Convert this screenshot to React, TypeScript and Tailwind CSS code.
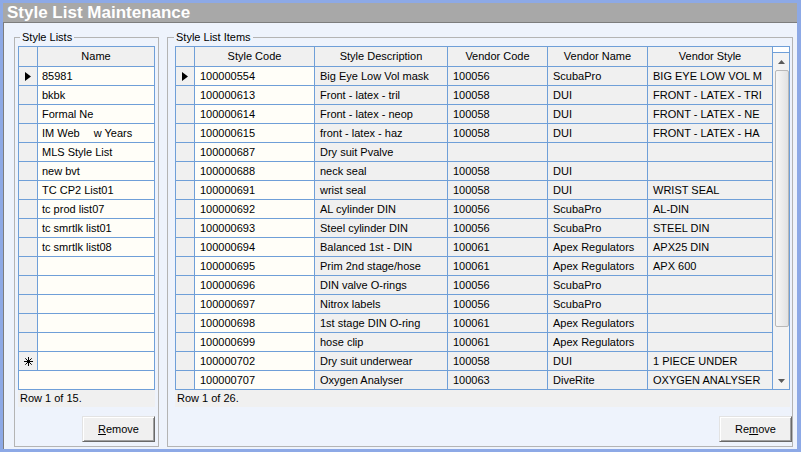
import React from "react";

const styleLists = [
  "85981",
  "bkbk",
  "Formal Ne",
  "IM Web|w Years",
  "MLS Style List",
  "new bvt",
  "TC CP2 List01",
  "tc prod list07",
  "tc smrtlk list01",
  "tc smrtlk list08",
  "",
  "",
  "",
  "",
  "",
];

const items: string[][] = [
  ["100000554", "Big Eye Low Vol mask", "100056", "ScubaPro", "BIG EYE LOW VOL M"],
  ["100000613", "Front - latex - tril", "100058", "DUI", "FRONT - LATEX - TRI"],
  ["100000614", "Front - latex - neop", "100058", "DUI", "FRONT - LATEX - NE"],
  ["100000615", "front - latex - haz", "100058", "DUI", "FRONT - LATEX - HA"],
  ["100000687", "Dry suit Pvalve", "", "", ""],
  ["100000688", "neck seal", "100058", "DUI", ""],
  ["100000691", "wrist seal", "100058", "DUI", "WRIST SEAL"],
  ["100000692", "AL cylinder DIN", "100056", "ScubaPro", "AL-DIN"],
  ["100000693", "Steel cylinder DIN", "100056", "ScubaPro", "STEEL DIN"],
  ["100000694", "Balanced 1st - DIN", "100061", "Apex Regulators", "APX25 DIN"],
  ["100000695", "Prim 2nd stage/hose", "100061", "Apex Regulators", "APX 600"],
  ["100000696", "DIN valve O-rings", "100056", "ScubaPro", ""],
  ["100000697", "Nitrox labels", "100056", "ScubaPro", ""],
  ["100000698", "1st stage DIN O-ring", "100061", "Apex Regulators", ""],
  ["100000699", "hose clip", "100061", "Apex Regulators", ""],
  ["100000702", "Dry suit underwear", "100058", "DUI", "1 PIECE UNDER"],
  ["100000707", "Oxygen Analyser", "100063", "DiveRite", "OXYGEN ANALYSER"],
];

const columns = [
  { title: "Style Code", w: "w-[120px]", bg: "bg-[#fffef8]" },
  { title: "Style Description", w: "w-[133px]", bg: "bg-[#f0f0f0]" },
  { title: "Vendor Code", w: "w-[100px]", bg: "bg-[#f0f0f0]" },
  { title: "Vendor Name", w: "w-[100px]", bg: "bg-[#f0f0f0]" },
  { title: "Vendor Style", w: "w-[125px]", bg: "bg-[#f0f0f0]" },
];

const RowArrow = () => (
  <svg width="6" height="9" viewBox="0 0 6 9">
    <polygon points="0,0 6,4.5 0,9" fill="#000" />
  </svg>
);

const NewRowMark = () => (
  <svg width="9" height="9" viewBox="0 0 9 9" stroke="#000" strokeWidth="1">
    <line x1="4.5" y1="0" x2="4.5" y2="9" />
    <line x1="0" y1="4.5" x2="9" y2="4.5" />
    <line x1="1.3" y1="1.3" x2="7.7" y2="7.7" />
    <line x1="7.7" y1="1.3" x2="1.3" y2="7.7" />
  </svg>
);

const RowHeader = ({ children }: { children?: React.ReactNode }) => (
  <div className="w-[19px] h-[19px] shrink-0 border-r border-b border-[#6f9fd8] bg-[#f0f0f0] flex items-center justify-center">
    {children}
  </div>
);

const RemoveButton = ({ hotkey }: { hotkey: number }) => {
  const word = "Remove";
  return (
    <button className="w-[73px] h-[26px] border border-t-[#e3e3e3] border-l-[#e3e3e3] border-b-[#696969] border-r-[#696969] shadow-[inset_1px_1px_0_#ffffff,inset_-1px_-1px_0_#a0a0a0] bg-[#f0f0f0] text-[11px] text-black">
      {word.slice(0, hotkey)}
      <span className="underline">{word[hotkey]}</span>
      {word.slice(hotkey + 1)}
    </button>
  );
};

const Scrollbar = () => (
  <div className="w-[16px] flex flex-col bg-[#f3f3f3]">
    <div className="h-[6px] bg-white border-b border-[#6f9fd8]" />
    <div className="h-[17px] flex items-center justify-center">
      <svg width="7" height="4" viewBox="0 0 7 4">
        <polygon points="0,4 3.5,0 7,4" fill="#5a5a5a" />
      </svg>
    </div>
    <div className="h-[257px] ml-[2px] rounded-[2px] border border-[#b8b8b8] bg-gradient-to-r from-[#f7f7f7] to-[#e2e2e2]" />
    <div className="flex-1" />
    <div className="h-[17px] flex items-center justify-center">
      <svg width="7" height="4" viewBox="0 0 7 4">
        <polygon points="0,0 3.5,4 7,0" fill="#5a5a5a" />
      </svg>
    </div>
  </div>
);

export default function App() {
  return (
    <div className="w-[801px] h-[452px] bg-[#8da9e6] pt-[3px] pl-[3px] pr-[4px] pb-[3px] flex flex-col font-['Liberation_Sans',Arial,sans-serif] text-black overflow-hidden">
      <div className="h-[20px] bg-[#a8a8a8] border-b border-[#7d7d7d] flex items-center pl-[4px]">
        <span className="text-[17px] font-bold text-white leading-[19px]">Style List Maintenance</span>
      </div>

      <div className="flex-1 bg-[#eef3fc] border-l border-[#7d7d7d] flex gap-[8px] pl-[10px] pt-[8px] pb-[2px] text-[11px]">
        {/* Style Lists */}
        <fieldset className="w-[145px] min-w-0 border border-[#b4b4b4] pl-[3px] pr-[3px] pb-[4px]">
          <legend className="ml-[2px] px-[2px] text-[11px] leading-[13px]">Style Lists</legend>
          <div className="flex flex-col pt-[2px]">
            <div className="w-[137px] border border-[#6f9fd8] bg-[#fffef8]">
              <div className="h-[342px] overflow-hidden">
                <div className="flex h-[20px]">
                  <div className="w-[19px] border-r border-b border-[#6f9fd8] bg-[#f0f0f0]" />
                  <div className="flex-1 border-b border-[#6f9fd8] bg-[#f0f0f0] flex items-center justify-center">
                    Name
                  </div>
                </div>
                {styleLists.map((name, i) => (
                  <div className="flex" key={i}>
                    <RowHeader>{i === 0 && <RowArrow />}</RowHeader>
                    <div className="flex-1 h-[19px] border-b border-[#6f9fd8] flex items-center pl-[4px] whitespace-nowrap">
                      {name.includes("|") ? (
                        <>
                          <span>{name.split("|")[0]}</span>
                          <span className="ml-[14px]">{name.split("|")[1]}</span>
                        </>
                      ) : (
                        name
                      )}
                    </div>
                  </div>
                ))}
                <div className="flex">
                  <RowHeader>
                    <NewRowMark />
                  </RowHeader>
                  <div className="flex-1 h-[19px] border-b border-[#6f9fd8]" />
                </div>
              </div>
            </div>
            <div className="w-[137px] h-[17px] bg-[#f0f0f0] flex items-center pl-[2px]">Row 1 of 15.</div>
            <div className="flex justify-end mt-[9px] w-[137px]">
              <RemoveButton hotkey={0} />
            </div>
          </div>
        </fieldset>

        {/* Style List Items */}
        <fieldset className="w-[626px] min-w-0 border border-[#b4b4b4] pl-[7px] pr-[2px] pb-[4px]">
          <legend className="ml-[-1px] px-[2px] text-[11px] leading-[13px]">Style List Items</legend>
          <div className="flex flex-col pt-[2px]">
            <div className="w-[615px] border border-[#6f9fd8] flex h-[344px]">
              <div className="h-[342px] overflow-hidden">
                <div className="flex h-[20px]">
                  <div className="w-[19px] border-r border-b border-[#6f9fd8] bg-[#f0f0f0]" />
                  {columns.map((c) => (
                    <div
                      key={c.title}
                      className={`${c.w} border-r border-b border-[#6f9fd8] bg-[#f0f0f0] flex items-center justify-center`}
                    >
                      {c.title}
                    </div>
                  ))}
                </div>
                {items.map((row, i) => (
                  <div className="flex" key={i}>
                    <RowHeader>{i === 0 && <RowArrow />}</RowHeader>
                    {row.map((v, j) => (
                      <div
                        key={j}
                        className={`${columns[j].w} ${columns[j].bg} h-[19px] border-r border-b border-[#6f9fd8] flex items-center pl-[5px] whitespace-nowrap overflow-hidden`}
                      >
                        {v}
                      </div>
                    ))}
                  </div>
                ))}
              </div>
              <Scrollbar />
            </div>
            <div className="w-[615px] h-[17px] bg-[#f0f0f0] flex items-center pl-[2px]">Row 1 of 26.</div>
            <div className="flex justify-end mt-[9px] w-[615px]">
              <div className="mr-[-2px]">
                <RemoveButton hotkey={2} />
              </div>
            </div>
          </div>
        </fieldset>
      </div>
    </div>
  );
}
